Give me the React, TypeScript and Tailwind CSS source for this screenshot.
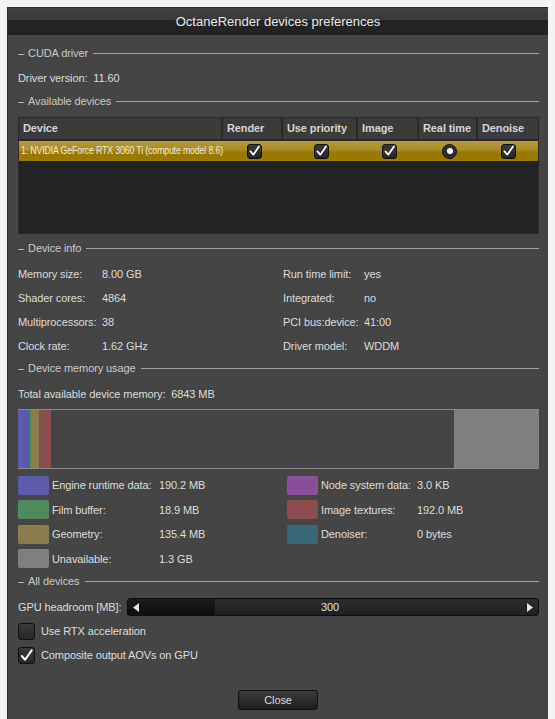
import React from 'react';

const font = { fontFamily: '"Liberation Sans", Arial, sans-serif' };

function Check({ size = 15 }: { size?: number }) {
  return (
    <svg width={size} height={size} viewBox="0 0 16 16">
      <path d="M3 8.5 L6.5 12.5 L13.5 2.5" fill="none" stroke="#ffffff" strokeWidth="2.2" strokeLinecap="round" strokeLinejoin="round" />
    </svg>
  );
}

function CheckBox({ checked, big = false }: { checked: boolean; big?: boolean }) {
  return (
    <div
      className={`${big ? 'w-[17px] h-[17px]' : 'w-[15px] h-[15px]'} rounded-[3px] border border-[#111] bg-[linear-gradient(to_bottom,#3a3a3a,#262626)] flex items-center justify-center`}
    >
      {checked && <Check size={big ? 17 : 14} />}
    </div>
  );
}

function Radio() {
  return (
    <div className="w-[15px] h-[15px] rounded-full border border-[#111] bg-[#2e2e2e] flex items-center justify-center">
      <div className="w-[6px] h-[6px] rounded-full bg-white" />
    </div>
  );
}

function SectionHeader({ title, className = '' }: { title: string; className?: string }) {
  return (
    <div className={`flex items-center gap-[4px] text-[11px] text-[#c8c8c8] ${className}`}>
      <span>–</span>
      <span>{title}</span>
      <div className="flex-1 h-px bg-[#a0a0a0] ml-[1px]" />
    </div>
  );
}

const columns = [
  { label: 'Device', w: 'w-[204px]' },
  { label: 'Render', w: 'w-[60px]' },
  { label: 'Use priority', w: 'w-[75px]' },
  { label: 'Image', w: 'w-[61px]' },
  { label: 'Real time', w: 'w-[59px]' },
  { label: 'Denoise', w: 'flex-1' },
];

const infoLeft = [
  ['Memory size:', '8.00 GB'],
  ['Shader cores:', '4864'],
  ['Multiprocessors:', '38'],
  ['Clock rate:', '1.62 GHz'],
];
const infoRight = [
  ['Run time limit:', 'yes'],
  ['Integrated:', 'no'],
  ['PCI bus:device:', '41:00'],
  ['Driver model:', 'WDDM'],
];

const legendLeft = [
  ['bg-[#5b5aab]', 'Engine runtime data:', '190.2 MB'],
  ['bg-[#4e8a5c]', 'Film buffer:', '18.9 MB'],
  ['bg-[#8c7e4c]', 'Geometry:', '135.4 MB'],
  ['bg-[#7f7f7f]', 'Unavailable:', '1.3 GB'],
];
const legendRight = [
  ['bg-[#8a4f9a]', 'Node system data:', '3.0 KB'],
  ['bg-[#8c4c4c]', 'Image textures:', '192.0 MB'],
  ['bg-[#386878]', 'Denoiser:', '0 bytes'],
];

export default function App() {
  return (
    <div className="w-[555px] h-[719px] bg-[#f4f4f4] overflow-hidden pt-[7px] pl-[7px] tracking-[-0.1px]" style={font}>
      <div className="w-[541px] h-[712px] bg-[#454545] border-l border-t border-[#2c2c2c] flex flex-col">
        {/* Title bar */}
        <div className="h-[27px] bg-[linear-gradient(to_bottom,#444_0px,#383838_12px,#232323_12px,#232323_100%)] flex items-center justify-center text-[13px] text-[#e8e8e8] pt-[1px] tracking-normal">
          OctaneRender devices preferences
        </div>

        <div className="pl-[10px] pr-[9px] flex flex-col">
          <SectionHeader title="CUDA driver" className="h-[20px] mt-[8px]" />
          <div className="h-[20px] mt-[5px] flex items-center text-[11px] text-[#dcdcdc]">
            Driver version:&nbsp;&nbsp;11.60
          </div>
          <SectionHeader title="Available devices" className="h-[20px] mt-[3px]" />

          {/* Devices table */}
          <div className="mt-[6px] h-[117px] bg-[#232323] border border-[#2a2a2a] flex flex-col">
            <div className="flex h-[23px] bg-[#3b3b3b] border-b-2 border-[#2a2a2a]">
              {columns.map((c, i) => (
                <div
                  key={c.label}
                  className={`${c.w} flex items-center px-[4px] text-[11px] font-bold text-[#d4d4d4] ${i < columns.length - 1 ? 'border-r-2 border-[#2a2a2a]' : ''}`}
                >
                  {c.label}
                </div>
              ))}
            </div>
            <div className="flex h-[20px] bg-[linear-gradient(to_bottom,#b59c3a_0%,#a98d22_45%,#9a7900_55%,#9a7900_100%)]">
              <div className="w-[204px] flex items-center pl-[2px] text-[10.5px] text-[#f2ead2] whitespace-nowrap">
                <span className="inline-block origin-left scale-x-[0.84] tracking-[-0.2px]">
                  1: NVIDIA GeForce RTX 3060 Ti (compute model 8.6)
                </span>
              </div>
              <div className="w-[60px] flex items-center justify-center pl-[2px]"><CheckBox checked /></div>
              <div className="w-[75px] flex items-center justify-center pl-[2px]"><CheckBox checked /></div>
              <div className="w-[61px] flex items-center justify-center pl-[2px]"><CheckBox checked /></div>
              <div className="w-[59px] flex items-center justify-center pl-[2px]"><Radio /></div>
              <div className="flex-1 flex items-center justify-center"><CheckBox checked /></div>
            </div>
          </div>

          <SectionHeader title="Device info" className="h-[20px] mt-[4px]" />
          <div className="mt-[4px] flex text-[11px] text-[#dcdcdc]">
            <div className="w-[265px] flex flex-col">
              {infoLeft.map(([k, v]) => (
                <div key={k} className="h-[24px] flex items-center">
                  <span className="w-[84px]">{k}</span>
                  <span>{v}</span>
                </div>
              ))}
            </div>
            <div className="flex flex-col">
              {infoRight.map(([k, v]) => (
                <div key={k} className="h-[24px] flex items-center">
                  <span className="w-[81px]">{k}</span>
                  <span>{v}</span>
                </div>
              ))}
            </div>
          </div>

          <SectionHeader title="Device memory usage" className="h-[20px]" />
          <div className="h-[20px] mt-[6px] flex items-center text-[11px] text-[#dcdcdc]">
            Total available device memory:&nbsp;&nbsp;6843 MB
          </div>

          {/* Memory bar */}
          <div className="mt-[5px] h-[60px] border-y border-[#8a8a8a] flex">
            <div className="w-[12px] bg-[#5b5aab]" />
            <div className="w-[1px] bg-[#4e8a5c]" />
            <div className="w-[8px] bg-[#8c7e4c]" />
            <div className="w-[12px] bg-[#8c4c4c]" />
            <div className="flex-1" />
            <div className="w-[85px] bg-[#808080]" />
          </div>

          {/* Legend */}
          <div className="mt-[4px] flex text-[11px] text-[#dcdcdc]">
            <div className="w-[269px] flex flex-col">
              {legendLeft.map(([c, k, v]) => (
                <div key={k} className="h-[24.5px] flex items-center">
                  <div className={`w-[31px] h-[19px] rounded-[2px] ${c}`} />
                  <span className="w-[110px] pl-[3px] whitespace-nowrap">{k}</span>
                  <span>{v}</span>
                </div>
              ))}
            </div>
            <div className="flex flex-col">
              {legendRight.map(([c, k, v]) => (
                <div key={k} className="h-[24.5px] flex items-center">
                  <div className={`w-[31px] h-[19px] rounded-[2px] ${c}`} />
                  <span className="w-[99px] pl-[3px] whitespace-nowrap">{k}</span>
                  <span>{v}</span>
                </div>
              ))}
            </div>
          </div>

          <SectionHeader title="All devices" className="h-[18px] mt-[1px]" />

          {/* GPU headroom */}
          <div className="h-[20px] mt-[7px] flex items-center text-[11px] text-[#dcdcdc]">
            <span className="w-[109px] whitespace-nowrap">GPU headroom [MB]:</span>
            <div className="relative flex-1 h-[18px] rounded-[3px] border border-[#0c0c0c] overflow-hidden flex bg-[linear-gradient(to_bottom,#2e2e2e,#1e1e1e)]">
              <div className="w-[87px] bg-[linear-gradient(to_bottom,#1c1c1c,#0e0e0e)]" />
              <div className="absolute inset-0 flex items-center justify-between px-[5px]">
                <svg width="7" height="9" viewBox="0 0 7 9"><path d="M6 0 L0 4.5 L6 9 Z" fill="#e0e0e0" /></svg>
                <span className="text-[11px] text-[#e0e0e0] pr-[6px]">300</span>
                <svg width="7" height="9" viewBox="0 0 7 9"><path d="M1 0 L7 4.5 L1 9 Z" fill="#e0e0e0" /></svg>
              </div>
            </div>
          </div>

          <div className="h-[20px] mt-[4px] flex items-center gap-[6px] text-[11px] text-[#dcdcdc]">
            <CheckBox checked={false} big />
            <span>Use RTX acceleration</span>
          </div>
          <div className="h-[20px] mt-[4px] flex items-center gap-[6px] text-[11px] text-[#dcdcdc]">
            <CheckBox checked big />
            <span>Composite output AOVs on GPU</span>
          </div>

          <div className="mt-[25px] flex justify-center pr-[1px]">
            <button className="w-[80px] h-[20px] rounded-[3px] border border-[#0e0e0e] bg-[linear-gradient(to_bottom,#3c3c3c,#1e1e1e)] text-[11px] text-[#dcdcdc]">
              Close
            </button>
          </div>
        </div>
      </div>
    </div>
  );
}
